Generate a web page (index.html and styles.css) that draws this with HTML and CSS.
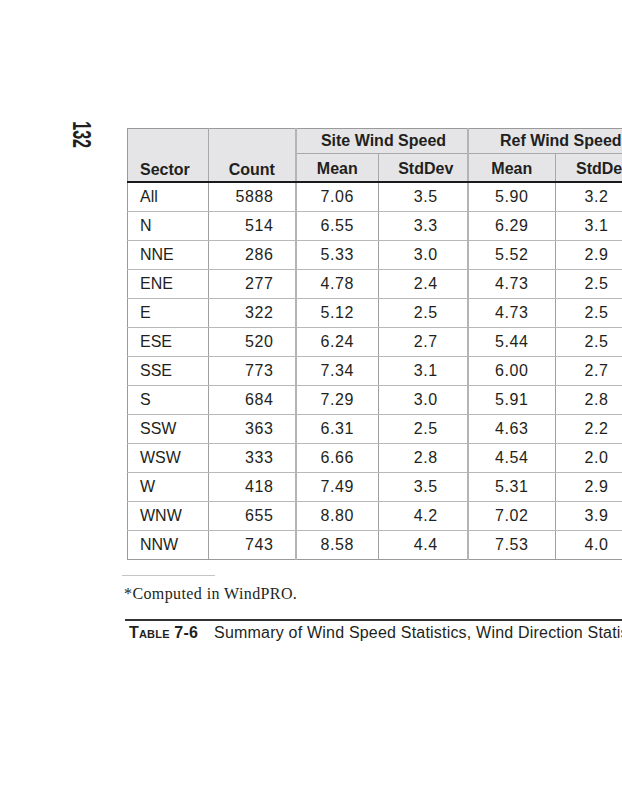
FILE: index.html
```html
<!DOCTYPE html>
<html>
<head>
<meta charset="utf-8">
<link rel="stylesheet" href="styles.css">
</head>
<body>
<div class="page">
  <div class="main">
    <div class="gutter"><span class="folio">132</span></div>
    <div class="content">
      <table class="stats">
        <colgroup>
          <col class="c1"><col class="c2"><col class="c3"><col class="c4"><col class="c5"><col class="c6">
        </colgroup>
        <thead>
          <tr class="h1">
            <th rowspan="2" class="sector">Sector</th>
            <th rowspan="2" class="count">Count</th>
            <th colspan="2" class="grp">Site Wind Speed</th>
            <th colspan="2" class="grp grp-ref">Ref Wind Speed</th>
          </tr>
          <tr class="h2">
            <th class="gl">Mean</th><th class="sd">StdDev</th><th class="gl">Mean</th><th class="sd last">StdDev</th>
          </tr>
        </thead>
        <tbody>
          <tr><td class="sector">All</td><td class="num">5888</td><td class="gl">7.06</td><td class="sd">3.5</td><td class="gl">5.90</td><td class="sd last">3.2</td></tr>
          <tr><td class="sector">N</td><td class="num">514</td><td class="gl">6.55</td><td class="sd">3.3</td><td class="gl">6.29</td><td class="sd last">3.1</td></tr>
          <tr><td class="sector">NNE</td><td class="num">286</td><td class="gl">5.33</td><td class="sd">3.0</td><td class="gl">5.52</td><td class="sd last">2.9</td></tr>
          <tr><td class="sector">ENE</td><td class="num">277</td><td class="gl">4.78</td><td class="sd">2.4</td><td class="gl">4.73</td><td class="sd last">2.5</td></tr>
          <tr><td class="sector">E</td><td class="num">322</td><td class="gl">5.12</td><td class="sd">2.5</td><td class="gl">4.73</td><td class="sd last">2.5</td></tr>
          <tr><td class="sector">ESE</td><td class="num">520</td><td class="gl">6.24</td><td class="sd">2.7</td><td class="gl">5.44</td><td class="sd last">2.5</td></tr>
          <tr><td class="sector">SSE</td><td class="num">773</td><td class="gl">7.34</td><td class="sd">3.1</td><td class="gl">6.00</td><td class="sd last">2.7</td></tr>
          <tr><td class="sector">S</td><td class="num">684</td><td class="gl">7.29</td><td class="sd">3.0</td><td class="gl">5.91</td><td class="sd last">2.8</td></tr>
          <tr><td class="sector">SSW</td><td class="num">363</td><td class="gl">6.31</td><td class="sd">2.5</td><td class="gl">4.63</td><td class="sd last">2.2</td></tr>
          <tr><td class="sector">WSW</td><td class="num">333</td><td class="gl">6.66</td><td class="sd">2.8</td><td class="gl">4.54</td><td class="sd last">2.0</td></tr>
          <tr><td class="sector">W</td><td class="num">418</td><td class="gl">7.49</td><td class="sd">3.5</td><td class="gl">5.31</td><td class="sd last">2.9</td></tr>
          <tr><td class="sector">WNW</td><td class="num">655</td><td class="gl">8.80</td><td class="sd">4.2</td><td class="gl">7.02</td><td class="sd last">3.9</td></tr>
          <tr><td class="sector">NNW</td><td class="num">743</td><td class="gl">8.58</td><td class="sd">4.4</td><td class="gl">7.53</td><td class="sd last">4.0</td></tr>
        </tbody>
      </table>
      <div class="fn-rule"></div>
      <p class="footnote">*Computed in WindPRO.</p>
      <div class="caption"><span class="cap-label">Table 7-6</span><span class="cap-text">Summary of Wind Speed Statistics, Wind Direction Statistics, and Weibull Parameters by Sector</span></div>
    </div>
  </div>
</div>
</body>
</html>
```

FILE: styles.css
```css
html, body {
  margin: 0;
  padding: 0;
  background: #ffffff;
  overflow: hidden;
}

.page {
  width: 622px;
  height: 800px;
  overflow: hidden;
  box-sizing: border-box;
  padding-top: 120px;
  color: #231f20;
}

.main {
  display: flex;
  align-items: flex-start;
}

.gutter {
  flex: none;
  width: 122px;
}

.folio {
  display: block;
  width: 43px;
  height: 27px;
  margin-left: 60px;
  margin-top: 1px;
  font: bold 26px/27px "Liberation Sans", Arial, sans-serif;
  text-align: center;
  transform: rotate(90deg) scaleX(0.62);
  color: #231f20;
}

.content {
  flex: none;
  width: 560px;
}

.stats {
  margin: 8px 0 0 5px;
  border-collapse: collapse;
  table-layout: fixed;
  width: 518px;
  font-family: "Liberation Sans", Arial, sans-serif;
  font-size: 16px;
  color: #231f20;
  border-left: 1px solid #9a9a9a;
  border-top: 1px solid #9a9a9a;
}

.c1 { width: 81px; }
.c2 { width: 87px; }
.c3 { width: 83px; }
.c4 { width: 89px; }
.c5 { width: 88px; }
.c6 { width: 90px; }

.stats th {
  background: #e5e5e7;
  font-weight: bold;
  padding: 0;
  border-right: 1px solid #a8a8a8;
}

.h1 th {
  height: 24px;
}

.h1 .grp {
  border-bottom: 1px solid #a8a8a8;
  border-left: 2px solid #b4b4b4;
  text-align: center;
  vertical-align: middle;
  padding-left: 4px;
}

.h1 .grp-ref {
  padding-left: 8px;
}

.h2 th {
  height: 24px;
  text-align: center;
  vertical-align: middle;
  padding-top: 3px;
  border-bottom: 2px solid #1a1a1a;
}

.stats th.sector,
.stats th.count {
  vertical-align: bottom;
  padding-bottom: 2px;
  border-bottom: 2px solid #1a1a1a;
}

.stats th.sector {
  text-align: left;
  padding-left: 12px;
}

.stats th.count {
  text-align: center;
}

.stats td {
  height: 28px;
  padding: 0;
  border-bottom: 1px solid #b8b8b8;
  border-right: 1px solid #a0a0a0;
  letter-spacing: 0.6px;
  vertical-align: middle;
  text-align: center;
}

.stats .gl {
  border-left: 2px solid #b4b4b4;
}

.stats td.sector {
  text-align: left;
  padding-left: 12px;
  letter-spacing: 0;
}

.stats td.num {
  text-align: right;
  padding-right: 21px;
}

.stats td.sd,
.stats th.sd {
  padding-left: 6px;
}

.stats td.last {
  padding-left: 0;
  padding-right: 8px;
}

.stats th.last {
  padding-left: 6px;
}

.stats tbody tr:last-child td {
  border-bottom: 1px solid #9a9a9a;
}

.fn-rule {
  width: 93px;
  height: 1px;
  background: #c4c4c4;
  margin-top: 15px;
}

.footnote {
  margin: 8px 0 0 2px;
  font-family: "Liberation Serif", "Times New Roman", serif;
  font-size: 16px;
  line-height: 20px;
  letter-spacing: 0.4px;
  color: #231f20;
}

.caption {
  margin: 15px 0 0 3px;
  border-top: 2px solid #333333;
  padding: 2px 0 0 4px;
  white-space: nowrap;
  font-family: "Liberation Sans", Arial, sans-serif;
  font-size: 16px;
  line-height: 20px;
  color: #231f20;
  display: flex;
  gap: 16px;
}

.cap-label {
  font-weight: bold;
  font-variant: small-caps;
  letter-spacing: 0.2px;
}

.cap-text {
  letter-spacing: 0.2px;
}
```
